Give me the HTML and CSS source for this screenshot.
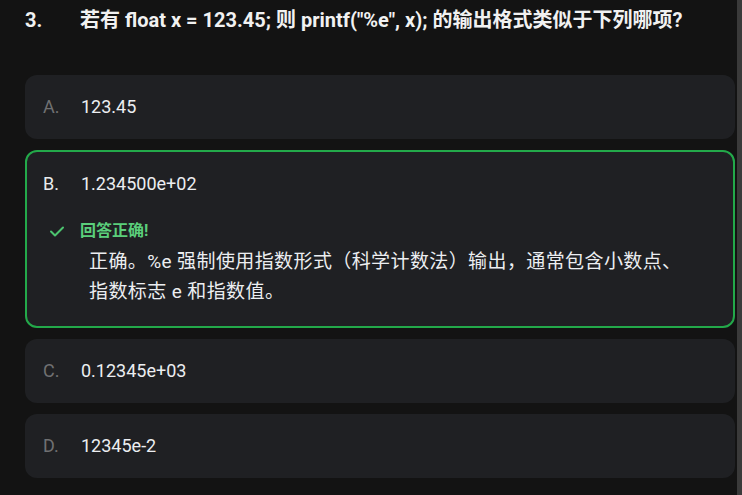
FILE: index.html
```html
<!DOCTYPE html>
<html lang="zh-CN">
<head>
  <meta charset="UTF-8" />
  <title>Quiz</title>
  <link rel="stylesheet" href="styles.css">
</head>
<body>
  <div class="page">
    <div class="content">
      <div class="question">
        <span class="q-num">3.</span>
        <span class="q-text">若有 float x = 123.45; 则 printf("%e", x); 的输出格式类似于下列哪项?</span>
      </div>

      <div class="options">
        <div class="option">
          <span class="opt-letter">A.</span>
          <span class="opt-text">123.45</span>
        </div>

        <div class="option correct">
          <div class="opt-row">
            <span class="opt-letter">B.</span>
            <span class="opt-text">1.234500e+02</span>
          </div>
          <div class="feedback">
            <div class="feedback-title">
              <svg class="check" width="16" height="16" viewBox="0 0 16 16">
                <path d="M2 8.5 L6 12.5 L14 4.5" fill="none" stroke="#4cc46f" stroke-width="2" stroke-linecap="round" stroke-linejoin="round"/>
              </svg>
              <span>回答正确!</span>
            </div>
            <p class="explain">正确。%e 强制使用指数形式（科学计数法）输出，通常包含小数点、指数标志 e 和指数值。</p>
          </div>
        </div>

        <div class="option">
          <span class="opt-letter">C.</span>
          <span class="opt-text">0.12345e+03</span>
        </div>

        <div class="option">
          <span class="opt-letter">D.</span>
          <span class="opt-text">12345e-2</span>
        </div>
      </div>
    </div>
    <div class="scrollbar"></div>
  </div>
</body>
</html>
```

FILE: styles.css
```css
body {
  margin: 0;
  background-color: #131313;
  color: #e8eaed;
  font-family: Roboto, "Noto Sans CJK SC", sans-serif;
}
.page {
  display: flex;
  height: 100vh;
  overflow: hidden;
}
.content {
  flex: 1;
  padding: 7px 2px 0 25px;
}
.scrollbar {
  width: 5px;
  background-color: #3a3a3a;
}
.question {
  display: flex;
  font-size: 20px;
  font-weight: 700;
  line-height: 26px;
  color: #f1f1f1;
}
.q-num {
  width: 55px;
  flex-shrink: 0;
}
.options {
  margin-top: 42px;
  display: flex;
  flex-direction: column;
  gap: 11px;
}
.option {
  display: flex;
  align-items: center;
  background-color: #1f2023;
  border-radius: 12px;
  padding: 20px 18px;
  font-size: 18px;
  line-height: 24px;
}
.opt-letter {
  width: 38px;
  flex-shrink: 0;
  color: #6f7072;
}
.opt-text {
  color: #eceef1;
}
.option.correct {
  display: block;
  border: 2px solid #23a94a;
  padding: 20px 16px 19px 16px;
}
.opt-row {
  display: flex;
  align-items: center;
}
.option.correct .opt-letter {
  color: #e8eaed;
}
.feedback {
  margin-top: 24px;
}
.feedback-title {
  display: flex;
  align-items: center;
  gap: 15px;
  padding-left: 6px;
  font-size: 16px;
  font-weight: 700;
  line-height: 22px;
  color: #5bcf7b;
}
.check {
  display: block;
}
.explain {
  max-width: 608px;
  margin: 5px 0 0 46px;
  font-size: 19px;
  letter-spacing: 0.4px;
  line-height: 30px;
  color: #eceef1;
}
```
